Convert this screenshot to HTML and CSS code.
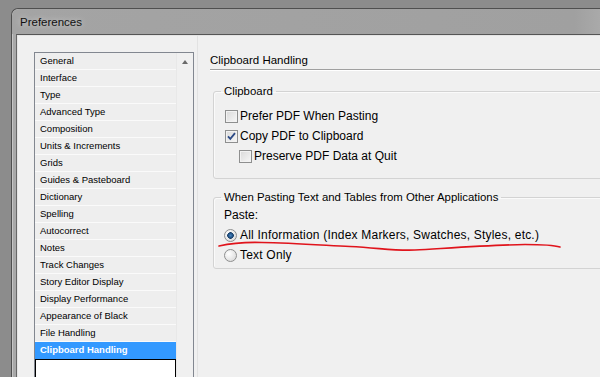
FILE: index.html
```html
<!DOCTYPE html>
<html lang="en">
<head>
  <meta charset="UTF-8">
  <meta name="viewport" content="width=device-width, initial-scale=1.0">
  <title>Preferences</title>
  <link rel="stylesheet" href="styles.css">
</head>
<body>
  <div class="window">
    <div class="titlebar">Preferences</div>
    <div class="client">
      <!-- Category list on the left -->
      <div class="category-list">
        <ul class="items">
          <li>General</li>
          <li>Interface</li>
          <li>Type</li>
          <li>Advanced Type</li>
          <li>Composition</li>
          <li>Units &amp; Increments</li>
          <li>Grids</li>
          <li>Guides &amp; Pasteboard</li>
          <li>Dictionary</li>
          <li>Spelling</li>
          <li>Autocorrect</li>
          <li>Notes</li>
          <li>Track Changes</li>
          <li>Story Editor Display</li>
          <li>Display Performance</li>
          <li>Appearance of Black</li>
          <li>File Handling</li>
          <li class="selected">Clipboard Handling</li>
          <li class="focus"></li>
        </ul>
        <div class="scrollbar"><span class="arrow-up"></span></div>
      </div>

      <!-- Settings panel -->
      <div class="panel">
        <h1 class="panel-title">Clipboard Handling</h1>

        <fieldset class="group group-clipboard">
          <legend>Clipboard</legend>
          <label class="option"><span class="checkbox"></span>Prefer PDF When Pasting</label>
          <label class="option"><span class="checkbox checked"><svg viewBox="0 0 11 11" width="11" height="11"><path d="M2 5.3 L4.3 7.8 L9 2.2" fill="none" stroke="#2c4a86" stroke-width="1.8"/></svg></span>Copy PDF to Clipboard</label>
          <label class="option indent"><span class="checkbox"></span>Preserve PDF Data at Quit</label>
        </fieldset>

        <fieldset class="group group-paste">
          <legend>When Pasting Text and Tables from Other Applications</legend>
          <div class="option">Paste:</div>
          <label class="option radio-option"><span class="radio selected"></span>All Information (Index Markers, Swatches, Styles, etc.)</label>
          <label class="option radio-option"><span class="radio"></span>Text Only</label>
        </fieldset>
      </div>
    </div>
  </div>

  <!-- hand-drawn red underline on top of the screenshot -->
  <svg class="scribble" viewBox="0 0 600 377" width="600" height="377">
    <path d="M219 246 C 232 243, 245 242, 262 242.5 C 290 243, 320 245, 350 246.5 C 380 248, 395 251, 415 250 C 450 248, 490 245, 525 244.5 C 545 244.5, 555 245.5, 560 247" fill="none" stroke="#e0141c" stroke-width="1.6" stroke-linecap="round"/>
  </svg>
</body>
</html>
```

FILE: styles.css
```css
/* Cores da janela */
:root {
  --desktop: #8c8c8c;
  --frame: #a8a8a8;
  --frame-dark: #4f4f4f;
  --client-bg: #f0f0f0;
  --list-border: #828790;
  --row-bg: #eeeeee;
  --selected: #3399ff;
  --group-border: #d3d3d3;
  --text: #000;
}

* {
  box-sizing: border-box;
}

html,
body {
  margin: 0;
  padding: 0;
  width: 600px;
  height: 377px;
  overflow: hidden;
}

body {
  position: relative;
  background: var(--desktop);
  color: var(--text);
  font-family: "Liberation Sans", Arial, sans-serif;
}

/* Janela */
.window {
  width: 640px;
  height: 420px;
  margin: 8px 0 0 11px;
  background: var(--frame);
  border-top: 1px solid var(--frame-dark);
  border-left: 1px solid var(--frame-dark);
  border-top-left-radius: 7px;
  box-shadow: inset 1px 1px 0 rgba(255, 255, 255, 0.35);
}

.titlebar {
  height: 25px;
  line-height: 26px;
  padding-left: 8px;
  font-size: 11.5px;
  color: #111;
  text-shadow: 0 0 6px rgba(255, 255, 255, 0.6);
  background: linear-gradient(to right, #a4a4a4 0%, #a0a0a0 88%, #b3b3b3 96%, #a8a8a8 100%);
  border-top-left-radius: 7px;
}

.client {
  display: flex;
  align-items: flex-start;
  height: 400px;
  margin-left: 4px;
  padding: 17px 0 0 17px;
  background: var(--client-bg);
  border-top: 1px solid #555;
  border-left: 1px solid #666;
  box-shadow: inset 1px 1px 0 #e4e4e4;
}

/* Lista de categorias */
.category-list {
  display: flex;
  flex: none;
  width: 160px;
  height: 360px;
  border: 1px solid var(--list-border);
  background: #fff;
}

.items {
  width: 141px;
  margin: 0;
  padding: 0;
  list-style: none;
}

.items li {
  height: 17px;
  padding-left: 5px;
  line-height: 16px;
  font-size: 9.5px;
  background: var(--row-bg);
  border-bottom: 1px solid #fafafa;
  white-space: nowrap;
}

.items li.selected {
  background: var(--selected);
  border-bottom-color: var(--selected);
  color: #fff;
  font-weight: bold;
}

.items li.focus {
  height: 40px;
  background: #fff;
  border: 1px solid #000;
}

.scrollbar {
  width: 17px;
  background: #f0f0f0;
  border-left: 1px solid #e8e8e8;
}

.arrow-up {
  display: block;
  width: 0;
  height: 0;
  margin: 7px auto 0;
  border-left: 3.5px solid transparent;
  border-right: 3.5px solid transparent;
  border-bottom: 4px solid #6a6a6a;
}

/* Painel da direita */
.panel {
  flex: none;
  width: 420px;
  height: 380px;
  margin: -17px 0 0 3px;
  padding: 17px 0 0 12px;
  border-left: 1px solid #e2e2e2;
  font-size: 12px;
}

.panel-title {
  margin: 0;
  height: 18px;
  line-height: 17px;
  font-size: 11.5px;
  font-weight: normal;
  border-bottom: 1px solid #a0a0a0;
  box-shadow: 0 1px 0 #fff;
}

.group {
  margin: 13px 0 0 3px;
  padding: 7px 0 12px 10px;
  min-width: 0;
  border: 1px solid var(--group-border);
  border-radius: 3px;
  box-shadow: inset 1px 1px 0 #fafafa;
}

.group-paste {
  margin-top: 10px;
  padding-top: 0;
  padding-bottom: 3px;
}

.group legend {
  margin-left: -3px;
  padding: 0 3px;
  line-height: 16px;
  font-size: 11.4px;
}

.option {
  display: flex;
  align-items: center;
  height: 20px;
  white-space: nowrap;
}

.option.indent {
  padding-left: 14px;
}

.radio-option {
  letter-spacing: 0.2px;
}

.checkbox {
  display: inline-flex;
  align-items: center;
  justify-content: center;
  width: 13px;
  height: 13px;
  margin: 0 2px 0 1px;
  border: 1px solid #8e8f8f;
  background: linear-gradient(135deg, #d9d9d9, #f7f7f7);
  box-shadow: inset 0 0 0 1px #f2f2f2;
}

.radio {
  width: 13px;
  height: 13px;
  margin: 0 3px 0 0;
  border: 1px solid #8e8f8f;
  border-radius: 50%;
  background: radial-gradient(circle at 35% 35%, #ffffff, #d4d4d4);
}

.radio.selected {
  background:
    radial-gradient(circle, #4b86bf 0, #24578c 2px, #1c3f66 3px, transparent 3.6px),
    radial-gradient(circle at 35% 35%, #ffffff, #d4d4d4);
}

/* Risco vermelho */
.scribble {
  position: absolute;
  top: 0;
  left: 0;
  pointer-events: none;
}
```
